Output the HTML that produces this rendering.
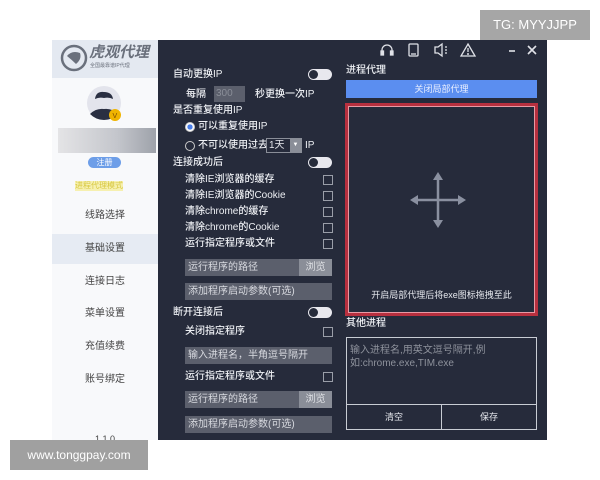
<!DOCTYPE html>
<html><head><meta charset="utf-8">
<style>
*{margin:0;padding:0;box-sizing:border-box}
body{width:600px;height:480px;background:#fff;position:relative;overflow:hidden;font-family:"Liberation Sans","Noto Sans CJK SC",sans-serif;}
.a{position:absolute;white-space:nowrap}
.t{color:#eef0f4;font-size:10px;line-height:12px;font-weight:500}
.side{position:absolute;left:52px;top:40px;width:106px;height:400px;background:#f8f9fb}
.dark{position:absolute;left:158px;top:40px;width:389px;height:400px;background:#262b3b}
.nav{position:absolute;left:52px;width:106px;text-align:center;font-size:10px;color:#444;line-height:12px}
.tog{position:absolute;width:24px;height:11px;border-radius:6px;background:#e8e8ee}
.tog:before{content:"";position:absolute;left:1px;top:1px;width:9px;height:9px;border-radius:50%;background:#262b3b}
.cb{position:absolute;left:323px;width:10px;height:10px;border:1px solid #9a9ea8}
.inp{position:absolute;left:185px;width:147px;height:17px;background:#5b5f6c;color:#d8dae0;font-size:10px;line-height:17px;padding-left:3px}
.br{position:absolute;right:0;top:0;width:33px;height:17px;background:#8a8e98;color:#e0e2e6;text-align:center}
</style></head><body>
<div class="side"></div>
<div class="a" style="left:52px;top:40px;width:106px;height:38px;background:#e4e9f1"></div>
<svg class="a" style="left:60px;top:44px" width="28" height="28"><circle cx="14" cy="14" r="12" fill="none" stroke="#6a707c" stroke-width="2.5"/><path d="M7 12 Q12 6 20 9 Q22 15 16 20 Q12 16 7 12Z" fill="#6a707c"/></svg>
<div class="a" style="left:89px;top:44px;font-size:15px;font-weight:bold;font-style:italic;color:#6a707c;line-height:17px">虎观代理</div>
<div class="a" style="left:90px;top:62px;font-size:5px;color:#6a707c">全国最靠谱IP代理</div>
<svg class="a" style="left:86px;top:85px" width="40" height="38"><circle cx="18" cy="18" r="17" fill="#e3e4ec"/><path d="M9 14 Q10 6 18 7 Q26 7 27 14 Q23 12 18 13 Q13 12 9 14Z" fill="#2a2f42"/><path d="M4 29 Q10 23 18 24 Q26 23 32 29 Q26 35 18 35 Q10 35 4 29Z" fill="#2a2f42"/><circle cx="29" cy="30" r="6" fill="#f0b400"/><text x="26.5" y="33" font-size="7" fill="#7a4a00" font-family="Liberation Sans">V</text></svg>
<div class="a" style="left:58px;top:128px;width:98px;height:25px;background:linear-gradient(90deg,#e4e4e6,#c4c6cc 60%,#9ea2aa)"></div>
<div class="a" style="left:88px;top:157px;width:33px;height:11px;border-radius:6px;background:#6d9ee8;color:#fff;font-size:8px;line-height:11px;text-align:center">注册</div>
<div class="a" style="left:75px;top:181px;font-size:8px;color:#d8c840;background:#f6f0b0;line-height:10px">进程代理模式</div>
<div class="nav" style="top:210px">线路选择</div>
<div class="a" style="left:52px;top:234px;width:106px;height:30px;background:#e6ebf3"></div>
<div class="nav" style="top:243px">基础设置</div>
<div class="nav" style="top:276px">连接日志</div>
<div class="nav" style="top:308px">菜单设置</div>
<div class="nav" style="top:341px">充值续费</div>
<div class="nav" style="top:374px">账号绑定</div>
<div class="nav" style="top:433px;font-size:9px">1.1.0</div>

<div class="dark"></div>
<svg class="a" style="left:378px;top:41px" width="165" height="18" fill="none" stroke="#e0e2e8" stroke-width="1.3">
<path d="M4 12 V9 A5 5 0 0 1 14 9 V12"/><rect x="3" y="10" width="2.5" height="4" fill="#e0e2e8"/><rect x="12.5" y="10" width="2.5" height="4" fill="#e0e2e8"/>
<rect x="31" y="3" width="9" height="12" rx="1"/><line x1="33" y1="13" x2="38" y2="13"/>
<path d="M57 6 H60 L64 3 V15 L60 12 H57Z"/><path d="M67 6 l2 0 M67 9 l2 0 M67 12 l2 0"/>
<path d="M90 3 L97 15 H83Z"/><line x1="90" y1="7" x2="90" y2="11"/><circle cx="90" cy="13" r="0.4"/>
<line x1="131" y1="10" x2="137" y2="10" stroke-width="1.6"/>
<path d="M150 5 L158 13 M158 5 L150 13" stroke-width="1.6"/>
</svg>
<div class="a t" style="left:173px;top:69px">自动更换IP</div>
<div class="tog" style="left:308px;top:69px"></div>
<div class="a t" style="left:186px;top:89px">每隔</div>
<div class="a" style="left:214px;top:86px;width:31px;height:16px;background:#5b5f6c;color:#8a8e98;font-size:10px;line-height:16px;padding-left:2px">300</div>
<div class="a t" style="left:255px;top:89px">秒更换一次IP</div>
<div class="a t" style="left:173px;top:105px">是否重复使用IP</div>
<div class="a" style="left:185px;top:122px;width:10px;height:10px;border-radius:50%;border:1px solid #ccc;background:radial-gradient(#4a7ee8 45%,#fff 50%)"></div>
<div class="a t" style="left:198px;top:121px">可以重复使用IP</div>
<div class="a" style="left:185px;top:141px;width:10px;height:10px;border-radius:50%;border:1px solid #ccc"></div>
<div class="a t" style="left:198px;top:140px">不可以使用过去</div>
<div class="a" style="left:266px;top:138px;width:36px;height:15px;border:1px solid #8a8e98;background:#262b3b;color:#e6e8ee;font-size:10px;line-height:13px;padding-left:2px">1天<span style="position:absolute;right:0;top:0;width:11px;height:13px;background:#8a8e98;color:#fff;font-size:6px;text-align:center">▼</span></div>
<div class="a t" style="left:305px;top:140px">IP</div>
<div class="a t" style="left:173px;top:157px">连接成功后</div>
<div class="tog" style="left:308px;top:157px"></div>
<div class="a t" style="left:185px;top:174px">清除IE浏览器的缓存</div><div class="cb" style="top:175px"></div>
<div class="a t" style="left:185px;top:190px">清除IE浏览器的Cookie</div><div class="cb" style="top:191px"></div>
<div class="a t" style="left:185px;top:206px">清除chrome的缓存</div><div class="cb" style="top:207px"></div>
<div class="a t" style="left:185px;top:222px">清除chrome的Cookie</div><div class="cb" style="top:223px"></div>
<div class="a t" style="left:185px;top:238px">运行指定程序或文件</div><div class="cb" style="top:239px"></div>
<div class="inp" style="top:259px">运行程序的路径<div class="br">浏览</div></div>
<div class="inp" style="top:283px">添加程序启动参数(可选)</div>
<div class="a t" style="left:173px;top:307px">断开连接后</div>
<div class="tog" style="left:308px;top:307px"></div>
<div class="a t" style="left:185px;top:326px">关闭指定程序</div><div class="cb" style="top:327px"></div>
<div class="inp" style="top:347px">输入进程名，半角逗号隔开</div>
<div class="a t" style="left:185px;top:371px">运行指定程序或文件</div><div class="cb" style="top:372px"></div>
<div class="inp" style="top:391px">运行程序的路径<div class="br">浏览</div></div>
<div class="inp" style="top:416px">添加程序启动参数(可选)</div>
<div class="a t" style="left:346px;top:65px">进程代理</div>
<div class="a" style="left:346px;top:80px;width:191px;height:18px;background:#5b8ef0;color:#e8eeff;font-size:9px;line-height:18px;text-align:center">关闭局部代理</div>
<div class="a" style="left:345px;top:103px;width:193px;height:213px;border:3px solid #b8303f;box-shadow:inset 0 0 0 1px #e89aa4"></div>
<svg class="a" style="left:408px;top:170px" width="60" height="60" stroke="#8a90a0" stroke-width="2.5" fill="#8a90a0"><line x1="30" y1="6" x2="30" y2="54"/><line x1="5" y1="30" x2="55" y2="30"/><path d="M30 2 L25 10 H35Z M30 58 L25 50 H35Z M2 30 L10 25 V35Z M58 30 L50 25 V35Z" stroke="none"/></svg>
<div class="a" style="left:346px;top:288px;width:191px;text-align:center;color:#e6e8ee;font-size:9px">开启局部代理后将exe图标拖拽至此</div>
<div class="a t" style="left:346px;top:318px">其他进程</div>
<div class="a" style="left:346px;top:337px;width:191px;height:93px;border:1px solid #c8ccd4"></div>
<div class="a" style="left:350px;top:344px;color:#8e929c;font-size:10px;line-height:13px;white-space:normal;width:180px">输入进程名,用英文逗号隔开,例如:chrome.exe,TIM.exe</div>
<div class="a" style="left:346px;top:404px;width:96px;height:26px;border:1px solid #c8ccd4;color:#e6e8ee;font-size:9px;line-height:24px;text-align:center">清空</div>
<div class="a" style="left:441px;top:404px;width:96px;height:26px;border:1px solid #c8ccd4;color:#e6e8ee;font-size:9px;line-height:24px;text-align:center">保存</div>
<div class="a" style="left:480px;top:10px;width:110px;height:30px;background:#a6a6a6;color:#fff;font-size:13px;line-height:30px;text-align:center">TG: MYYJJPP</div>
<div class="a" style="left:10px;top:440px;width:138px;height:30px;background:#a0a0a0;color:#fff;font-size:12px;line-height:30px;text-align:center">www.tonggpay.com</div>
</body></html>
